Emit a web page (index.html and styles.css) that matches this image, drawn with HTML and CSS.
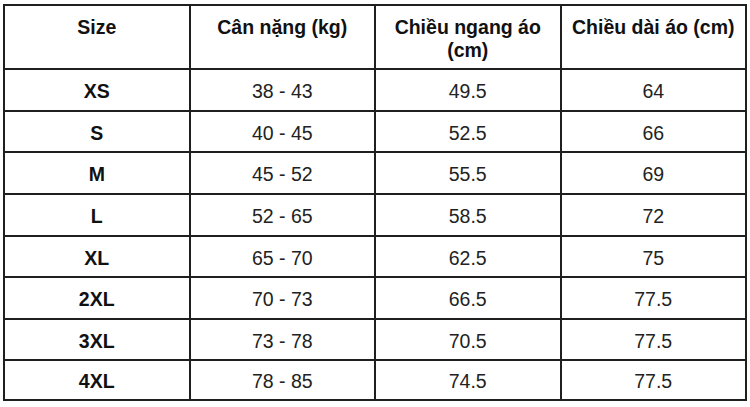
FILE: index.html
```html
<!DOCTYPE html>
<html lang="vi">
<head>
<meta charset="utf-8">
<link rel="stylesheet" href="styles.css">
</head>
<body>
<div class="wrap">
<table class="size-table">
  <colgroup><col class="c"><col class="c"><col class="c"><col class="c"></colgroup>
  <thead>
    <tr class="head">
      <th>Size</th>
      <th>Cân nặng (kg)</th>
      <th>Chiều ngang áo<br>(cm)</th>
      <th>Chiều dài áo (cm)</th>
    </tr>
  </thead>
  <tbody>
    <tr class="r42"><td class="sz">XS</td><td>38 - 43</td><td>49.5</td><td>64</td></tr>
    <tr class="r41"><td class="sz">S</td><td>40 - 45</td><td>52.5</td><td>66</td></tr>
    <tr class="r42"><td class="sz">M</td><td>45 - 52</td><td>55.5</td><td>69</td></tr>
    <tr class="r42"><td class="sz">L</td><td>52 - 65</td><td>58.5</td><td>72</td></tr>
    <tr class="r41"><td class="sz">XL</td><td>65 - 70</td><td>62.5</td><td>75</td></tr>
    <tr class="r42"><td class="sz">2XL</td><td>70 - 73</td><td>66.5</td><td>77.5</td></tr>
    <tr class="r41"><td class="sz">3XL</td><td>73 - 78</td><td>70.5</td><td>77.5</td></tr>
    <tr class="r40"><td class="sz">4XL</td><td>78 - 85</td><td>74.5</td><td>77.5</td></tr>
  </tbody>
</table>
</div>
</body>
</html>
```
FILE: styles.css
```css
html, body {
  margin: 0;
  padding: 0;
  background: #ffffff;
}
body {
  font-family: "Liberation Sans", Arial, sans-serif;
  color: #222222;
}
.wrap {
  padding: 4px 0 0 3px;
}
.size-table {
  border-collapse: collapse;
  table-layout: fixed;
  width: 742px;
  font-size: 19.5px;
}
.size-table .c {
  width: 185.5px;
}
.size-table th,
.size-table td {
  border: 2px solid #1f1f1f;
  text-align: center;
  padding: 0;
}
.size-table th {
  font-weight: bold;
  color: #111111;
  vertical-align: top;
  padding-top: 10px;
  line-height: 23px;
  height: 52px;
}
.size-table td {
  vertical-align: middle;
  line-height: 22px;
  padding-top: 2px;
}
.size-table .sz {
  font-weight: bold;
  color: #111111;
}
.r42 td { height: 38px; }
.r41 td { height: 37px; }
.r40 td { height: 36px; }
```
